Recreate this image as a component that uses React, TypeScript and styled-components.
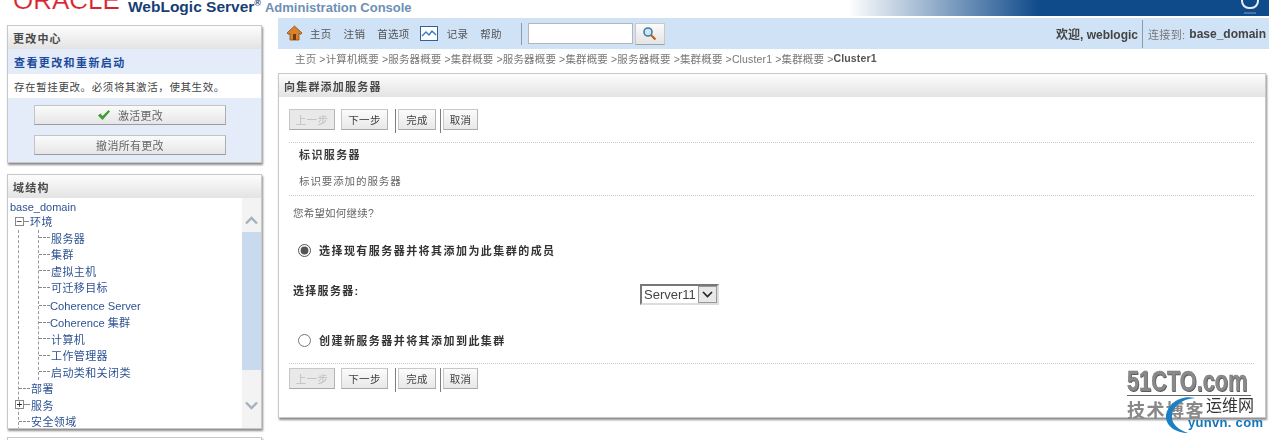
import styled, { createGlobalStyle } from "styled-components";

const Global = createGlobalStyle`
    html, body {
        margin: 0;
        padding: 0;
        background: #fff;
        overflow: hidden;
    }
    body {
        font-family: "Liberation Sans", "Noto Sans CJK SC", sans-serif;
        font-size: 11px;
        color: #444;
    }
`;

const Page = styled.div`
    width: 1269px;
    height: 440px;
    overflow: hidden;
    position: relative;
    filter: blur(0.35px);
`;

const Banner = styled.header`
    height: 16px;
    display: flex;
    align-items: flex-start;
    overflow: hidden;
    padding-left: 13px;
    background: linear-gradient(90deg, #fff 0, #fff 848px, #0f4a8a 1040px, #0f4a8a 100%);
`;

const OracleMark = styled.span`
    font-size: 26px;
    line-height: 26px;
    height: 26px;
    margin-top: -13px;
    width: 115px;
    flex-shrink: 0;
    color: #d8222e;
    -webkit-text-stroke: 0.2px #fff;
`;

const ProductName = styled.span`
    font-weight: 700;
    font-size: 15.5px;
    color: #173f74;
    line-height: 15px;
    margin-top: -1px;
    sup {
        font-size: 9px;
        line-height: 0;
    }
`;

const ConsoleName = styled.span`
    font-weight: 700;
    font-size: 13px;
    color: #6d8fb5;
    line-height: 15px;
    margin-left: 4px;
    flex: 1;
`;

const BannerLogo = styled.svg`
    margin-right: 9px;
    display: block;
`;

const Layout = styled.div`
    display: grid;
    grid-template-columns: 255px 991px;
    column-gap: 16px;
    padding: 2px 0 0 7px;
`;

const Side = styled.aside`
    display: flex;
    flex-direction: column;
    padding-top: 7px;
`;

const Box = styled.section<{ $h: number; $gap?: number; $right?: number }>`
    height: ${(p) => p.$h}px;
    margin-bottom: ${(p) => p.$gap ?? 0}px;
    margin-right: ${(p) => p.$right ?? 0}px;
    box-sizing: border-box;
    border: 1px solid #c8c8c8;
    box-shadow: 1px 2px 2px #8d8d8d;
    background: #fff;
    flex-shrink: 0;
    display: flex;
    flex-direction: column;
`;

const BoxTitle = styled.h2`
    margin: 0;
    height: 23px;
    flex-shrink: 0;
    box-sizing: border-box;
    padding-left: 5px;
    display: flex;
    align-items: center;
    font-size: 11px;
    font-weight: 700;
    letter-spacing: 1.2px;
    color: #4a4a4a;
    background: linear-gradient(#fdfdfd, #e3e3e3);
`;

const ChangeBody = styled.div`
    flex: 1;
    background: #e4ecf9;
    display: flex;
    flex-direction: column;
    align-items: flex-start;
`;

const ChangeLink = styled.a`
    align-self: stretch;
    height: 25px;
    padding-left: 6px;
    display: flex;
    align-items: center;
    font-weight: 700;
    font-size: 11px;
    letter-spacing: 1.4px;
    color: #1b4a9b;
`;

const ChangeNote = styled.div`
    align-self: stretch;
    height: 24px;
    padding-left: 6px;
    display: flex;
    align-items: center;
    background: #fff;
    font-size: 10.5px;
    letter-spacing: 0.6px;
    color: #444;
`;

const WideButton = styled.button<{ $gap: number }>`
    width: 192px;
    height: 20px;
    margin: ${(p) => p.$gap}px 0 0 26px;
    padding: 0;
    display: flex;
    align-items: center;
    justify-content: center;
    gap: 7px;
    font: inherit;
    letter-spacing: 0.3px;
    color: #666;
    background: linear-gradient(#fbfbfb, #e6e6e6);
    border: 1px solid #c4c4c4;
    border-bottom-color: #9b9b9b;
    border-right-color: #adadad;
`;

const TreeWrap = styled.div`
    flex: 1;
    display: flex;
    min-height: 0;
`;

const Tree = styled.div`
    flex: 1;
    overflow: hidden;
    padding: 2px 0 0 2px;
    color: #2e5294;
`;

const Domain = styled.div`
    font-size: 11px;
    line-height: 15px;
    margin-bottom: -2px;
`;

const Row = styled.div<{ $level: number; $top?: number }>`
    display: flex;
    align-items: center;
    height: 16.5px;
    margin-top: ${(p) => p.$top ?? 0}px;
    padding-left: ${(p) => (p.$level === 1 ? 6 : 0)}px;
    font-size: 11px;
    letter-spacing: 0.4px;
    white-space: nowrap;
`;

const Latin = styled.span`
    font-size: 11.2px;
    letter-spacing: 0;
    margin-left: -1px;
`;

const Branch = styled.i<{ $w: number }>`
    display: block;
    width: ${(p) => p.$w}px;
    border-top: 1px dashed #888;
    margin-right: 1px;
    flex-shrink: 0;
`;

const Expander = styled.b<{ $pull: number }>`
    display: flex;
    align-items: center;
    justify-content: center;
    width: 9px;
    height: 9px;
    box-sizing: border-box;
    border: 1px solid #888;
    font-size: 10px;
    line-height: 7px;
    font-weight: 400;
    color: #222;
    background: #fff;
    flex-shrink: 0;
    margin-left: ${(p) => p.$pull}px;
`;

const Children = styled.div`
    margin-left: 8px;
    border-left: 1px dashed #999;
`;

const Nested = styled.div`
    margin-left: 19px;
    border-left: 1px dashed #999;
`;

const Scroll = styled.div`
    width: 19px;
    flex-shrink: 0;
    background: #f3f3f3;
    display: flex;
    flex-direction: column;
    align-items: center;
`;

const ScrollEnd = styled.div<{ $top: number; $bottom: number }>`
    height: 34px;
    box-sizing: border-box;
    padding: ${(p) => p.$top}px 0 ${(p) => p.$bottom}px;
    display: flex;
    align-items: center;
    justify-content: center;
    flex-shrink: 0;
`;

const ScrollThumb = styled.div`
    align-self: stretch;
    height: 138px;
    background: #c9d9ee;
    flex-shrink: 0;
`;

const ScrollFill = styled.div`
    flex: 1;
`;

const Main = styled.main`
    display: flex;
    flex-direction: column;
`;

const Toolbar = styled.nav`
    height: 31px;
    background: #d0e2f5;
    display: flex;
    align-items: center;
    padding: 0 3px 0 8px;
    font-size: 10.5px;
    letter-spacing: 0.3px;
    color: #555;
`;

const ToolItem = styled.a<{ $gap?: number }>`
    margin-left: ${(p) => p.$gap ?? 12}px;
    white-space: nowrap;
`;

const ChartIcon = styled.svg`
    margin-left: 10px;
`;

const ToolSep = styled.span`
    width: 1px;
    height: 22px;
    background: #8d9aa8;
    margin: 0 6px 0 19px;
`;

const SearchInput = styled.div`
    width: 103px;
    height: 19px;
    background: #fff;
    border: 1px solid #b5b5b5;
`;

const SearchButton = styled.button`
    width: 30px;
    height: 22px;
    margin-left: 2px;
    padding: 0;
    display: flex;
    align-items: center;
    justify-content: center;
    background: linear-gradient(#fbfbfb, #e4e4e4);
    border: 1px solid #c8c8c8;
    border-bottom-color: #a3a3a3;
`;

const Spacer = styled.div`
    flex: 1;
`;

const Welcome = styled.span`
    font-weight: 700;
    font-size: 12px;
    letter-spacing: 0;
    color: #444;
`;

const WelcomeSep = styled.span`
    width: 1px;
    height: 28px;
    background: #8d9aa8;
    margin: 0 5px 0 4px;
`;

const ConnectLabel = styled.span`
    font-size: 11px;
    color: #777;
    margin-right: 4px;
`;

const Crumbs = styled.div`
    height: 24px;
    box-sizing: border-box;
    padding: 0 0 6px 17px;
    display: flex;
    align-items: center;
    font-size: 10.5px;
    letter-spacing: 0.15px;
    color: #777;
    white-space: pre;
    b {
        color: #555;
    }
`;

const WizardBody = styled.div`
    flex: 1;
    display: flex;
    flex-direction: column;
    padding: 12px 11px 0 10px;
`;

const Steps = styled.div`
    display: flex;
    align-items: flex-start;
    height: 33px;
    flex-shrink: 0;
`;

const StepButton = styled.button<{ $w: number; $off?: boolean; $after?: number }>`
    width: ${(p) => p.$w}px;
    height: 21px;
    margin-right: ${(p) => p.$after ?? 0}px;
    padding: 0;
    font: inherit;
    font-size: 10.5px;
    letter-spacing: 0.3px;
    color: ${(p) => (p.$off ? "#bdbdbd" : "#444")};
    background: ${(p) => (p.$off ? "#e9e9e9" : "linear-gradient(#fbfbfb, #e8e8e8)")};
    border: 1px solid #c8c8c8;
    border-bottom-color: #a9a9a9;
    border-right-color: #b4b4b4;
`;

const StepSep = styled.span`
    width: 1px;
    height: 24px;
    background: #7d7d7d;
    margin: 0 2px 0 0;
`;

const StepGap = styled.div`
    height: 4px;
    flex-shrink: 0;
`;

const Dotted = styled.hr`
    margin: 0;
    border: 0;
    border-top: 1px dotted #c8c8c8;
    flex-shrink: 0;
`;

const SectionHead = styled.div`
    height: 25px;
    box-sizing: border-box;
    padding: 0 0 3px 10px;
    display: flex;
    align-items: center;
    font-weight: 700;
    font-size: 11px;
    letter-spacing: 1.4px;
    color: #3c3c3c;
`;

const SectionText = styled.div`
    height: 27px;
    box-sizing: border-box;
    padding: 0 0 2px 10px;
    display: flex;
    align-items: center;
    font-size: 10.5px;
    letter-spacing: 0.9px;
    color: #666;
`;

const Question = styled.div`
    height: 33px;
    padding-left: 4px;
    display: flex;
    align-items: center;
    font-size: 10.5px;
    letter-spacing: 0.2px;
    color: #666;
`;

const Choice = styled.label<{ $h: number }>`
    height: ${(p) => p.$h}px;
    padding-left: 9px;
    display: flex;
    align-items: center;
    font-weight: 700;
    font-size: 11px;
    letter-spacing: 1.45px;
    color: #333;
    input {
        margin: 0 8px 0 0;
        width: 13px;
        height: 13px;
        accent-color: #555;
    }
`;

const FieldRow = styled.div`
    height: 46px;
    display: grid;
    grid-template-columns: 347px 79px;
    align-items: center;
    padding-left: 4px;
`;

const FieldLabel = styled.span`
    margin-bottom: 8px;
    font-weight: 700;
    font-size: 11px;
    letter-spacing: 1.3px;
    color: #333;
`;

const Picker = styled.div`
    height: 21px;
    box-sizing: border-box;
    border: 2px solid;
    border-color: #777 #ddd #ddd #777;
    display: flex;
    align-items: center;
    justify-content: space-between;
    font-size: 13px;
    color: #444;
    background: #fff;
    padding-left: 2px;
`;

const PickerArrow = styled.span`
    width: 19px;
    height: 17px;
    background: #e8e8e8;
    border: 1px solid #999;
    box-sizing: border-box;
    display: flex;
    align-items: center;
    justify-content: center;
`;

const Watermark = styled.div`
    position: absolute;
    left: 1125px;
    top: 366px;
    width: 144px;
    height: 74px;
`;

const WmBrand = styled.div`
    position: absolute;
    left: 2px;
    top: 0;
    width: 124px;
    height: 29px;
    border-bottom: 1px solid #666;
    overflow: hidden;
    span {
        display: inline-block;
        font-weight: 700;
        font-size: 30px;
        line-height: 30px;
        white-space: nowrap;
        color: #8a8a8a;
        -webkit-text-stroke: 0.6px #777;
        text-shadow: 1px 1px 0 #555;
        transform: scaleX(0.725);
        transform-origin: left center;
    }
`;

const WmBlog = styled.div`
    position: absolute;
    left: 2px;
    top: 33px;
    font-size: 18px;
    line-height: 24px;
    font-weight: 700;
    letter-spacing: 1.5px;
    color: #888;
`;

const WmNet = styled.div`
    position: absolute;
    left: 81px;
    top: 30px;
    font-size: 16px;
    line-height: 20px;
    color: #333;
`;

const WmSite = styled.div`
    position: absolute;
    left: 63px;
    top: 49px;
    font-size: 13px;
    line-height: 16px;
    font-weight: 700;
    letter-spacing: 0.3px;
    color: #1476bb;
    white-space: nowrap;
`;

const WmSwirl = styled.svg`
    position: absolute;
    left: 37px;
    top: 27px;
`;

const Chevron = ({ up }: { up?: boolean }) => (
    <svg width="13" height="9" viewBox="0 0 13 9">
        <path
            d={up ? "M1 7.5 6.5 2 12 7.5" : "M1 1.5 6.5 7 12 1.5"}
            fill="none"
            stroke="#a5b1bf"
            strokeWidth="2.4"
        />
    </svg>
);

const StepBar = () => (
    <Steps>
        <StepButton $w={46} $off $after={6}>上一步</StepButton>
        <StepButton $w={47} $after={7}>下一步</StepButton>
        <StepSep />
        <StepButton $w={38} $after={4}>完成</StepButton>
        <StepSep />
        <StepButton $w={35}>取消</StepButton>
    </Steps>
);

const groupItems = ["服务器", "集群", "虚拟主机", "可迁移目标"];
const laterItems = ["计算机", "工作管理器", "启动类和关闭类"];
const crumbs = [
    "主页", "计算机概要", "服务器概要", "集群概要", "服务器概要", "集群概要",
    "服务器概要", "集群概要", "Cluster1", "集群概要",
];

export default function App() {
    return (
        <Page>
            <Global />
            <Banner>
                <OracleMark>ORACLE</OracleMark>
                <ProductName>WebLogic Server<sup>®</sup></ProductName>
                <ConsoleName>Administration Console</ConsoleName>
                <BannerLogo width="20" height="16" viewBox="0 0 20 16">
                    <rect x="2" y="-8" width="16" height="16" rx="7" fill="none" stroke="#e8eef6" strokeWidth="2" />
                    <path d="M4 13h12" stroke="#7f9fc4" strokeWidth="1" />
                </BannerLogo>
            </Banner>
            <Layout>
                <Side>
                    <Box $h={138} $gap={11}>
                        <BoxTitle>更改中心</BoxTitle>
                        <ChangeBody>
                            <ChangeLink>查看更改和重新启动</ChangeLink>
                            <ChangeNote>存在暂挂更改。必须将其激活，使其生效。</ChangeNote>
                            <WideButton $gap={7}>
                                <svg width="14" height="12" viewBox="0 0 14 12">
                                    <path d="M1 6.5 3.5 4.5 5.5 7 11.5 1 13 2.5 5.5 11Z" fill="#3f9a35" />
                                </svg>
                                激活更改
                            </WideButton>
                            <WideButton $gap={10}>撤消所有更改</WideButton>
                        </ChangeBody>
                    </Box>
                    <Box $h={255} $gap={8}>
                        <BoxTitle>域结构</BoxTitle>
                        <TreeWrap>
                            <Tree>
                                <Domain>base_domain</Domain>
                                <Row $level={1}>
                                    <Expander $pull={-1}>−</Expander>
                                    <Branch $w={5} />环境
                                </Row>
                                <Children>
                                    <Nested>
                                        {groupItems.map((name) => (
                                            <Row key={name} $level={2}>
                                                <Branch $w={11} />{name}
                                            </Row>
                                        ))}
                                        <Row $level={2} $top={2}>
                                            <Branch $w={11} /><Latin>Coherence Server</Latin>
                                        </Row>
                                        <Row $level={2}>
                                            <Branch $w={11} /><Latin>Coherence 集群</Latin>
                                        </Row>
                                        {laterItems.map((name) => (
                                            <Row key={name} $level={2}>
                                                <Branch $w={11} />{name}
                                            </Row>
                                        ))}
                                    </Nested>
                                    <Row $level={0}>
                                        <Branch $w={11} />部署
                                    </Row>
                                    <Row $level={0}>
                                        <Expander $pull={-4}>+</Expander>
                                        <Branch $w={6} />服务
                                    </Row>
                                    <Row $level={0}>
                                        <Branch $w={11} />安全领域
                                    </Row>
                                </Children>
                            </Tree>
                            <Scroll>
                                <ScrollEnd $top={11} $bottom={0}><Chevron up /></ScrollEnd>
                                <ScrollThumb />
                                <ScrollFill />
                                <ScrollEnd $top={0} $bottom={12}><Chevron /></ScrollEnd>
                            </Scroll>
                        </TreeWrap>
                    </Box>
                    <Box $h={30} />
                </Side>
                <Main>
                    <Toolbar>
                        <svg width="17" height="17" viewBox="0 0 17 17">
                            <path d="M8.5 1 1 8l1.5 1.5L4 8.2V15h9V8.2l1.5 1.3L16 8Z" fill="#d9812b" stroke="#8a4f14" strokeWidth="0.8" />
                            <rect x="7" y="9" width="3" height="6" fill="#6e3a0c" />
                        </svg>
                        <ToolItem $gap={7}>主页</ToolItem>
                        <ToolItem>注销</ToolItem>
                        <ToolItem>首选项</ToolItem>
                        <ChartIcon width="18" height="15" viewBox="0 0 18 15">
                            <rect x="0.5" y="0.5" width="17" height="14" fill="#fff" stroke="#2f5f9e" />
                            <path d="M2 10 6 6l3 3 3-4 4 4" fill="none" stroke="#3a78c2" strokeWidth="1.4" />
                        </ChartIcon>
                        <ToolItem $gap={9}>记录</ToolItem>
                        <ToolItem>帮助</ToolItem>
                        <ToolSep />
                        <SearchInput />
                        <SearchButton>
                            <svg width="15" height="15" viewBox="0 0 15 15">
                                <circle cx="6" cy="6" r="4" fill="#cfe6f4" stroke="#3f7f9f" strokeWidth="1.6" />
                                <path d="M9 9l4.5 4.5" stroke="#b5651d" strokeWidth="2.2" />
                            </svg>
                        </SearchButton>
                        <Spacer />
                        <Welcome>欢迎, weblogic</Welcome>
                        <WelcomeSep />
                        <ConnectLabel>连接到:</ConnectLabel>
                        <Welcome>base_domain</Welcome>
                    </Toolbar>
                    <Crumbs>
                        {crumbs.map((c) => `${c} >`).join("")}
                        <b>Cluster1</b>
                    </Crumbs>
                    <Box $h={345} $right={3}>
                        <BoxTitle>向集群添加服务器</BoxTitle>
                        <WizardBody>
                            <StepBar />
                            <Dotted />
                            <SectionHead>标识服务器</SectionHead>
                            <SectionText>标识要添加的服务器</SectionText>
                            <Dotted />
                            <Question>您希望如何继续?</Question>
                            <Choice $h={42}>
                                <input type="radio" name="mode" defaultChecked />
                                选择现有服务器并将其添加为此集群的成员
                            </Choice>
                            <FieldRow>
                                <FieldLabel>选择服务器:</FieldLabel>
                                <Picker>
                                    Server11
                                    <PickerArrow>
                                        <svg width="11" height="7" viewBox="0 0 11 7">
                                            <path d="M1 1l4.5 4.5L10 1" fill="none" stroke="#222" strokeWidth="1.6" />
                                        </svg>
                                    </PickerArrow>
                                </Picker>
                            </FieldRow>
                            <Choice $h={46}>
                                <input type="radio" name="mode" />
                                创建新服务器并将其添加到此集群
                            </Choice>
                            <Dotted />
                            <StepGap />
                            <StepBar />
                        </WizardBody>
                    </Box>
                </Main>
            </Layout>
            <Watermark>
                <WmBrand><span>51CTO.com</span></WmBrand>
                <WmBlog>技术博客</WmBlog>
                <WmSwirl width="50" height="50" viewBox="0 0 50 50">
                    <path d="M33 5C18 1 4 12 4 24c0 9 10 16 22 16C15 36 9 30 10 22 11 13 20 6 33 5Z" fill="#1b7fc4" />
                </WmSwirl>
                <WmNet>运维网</WmNet>
                <WmSite>yunvn. com</WmSite>
            </Watermark>
        </Page>
    );
}
